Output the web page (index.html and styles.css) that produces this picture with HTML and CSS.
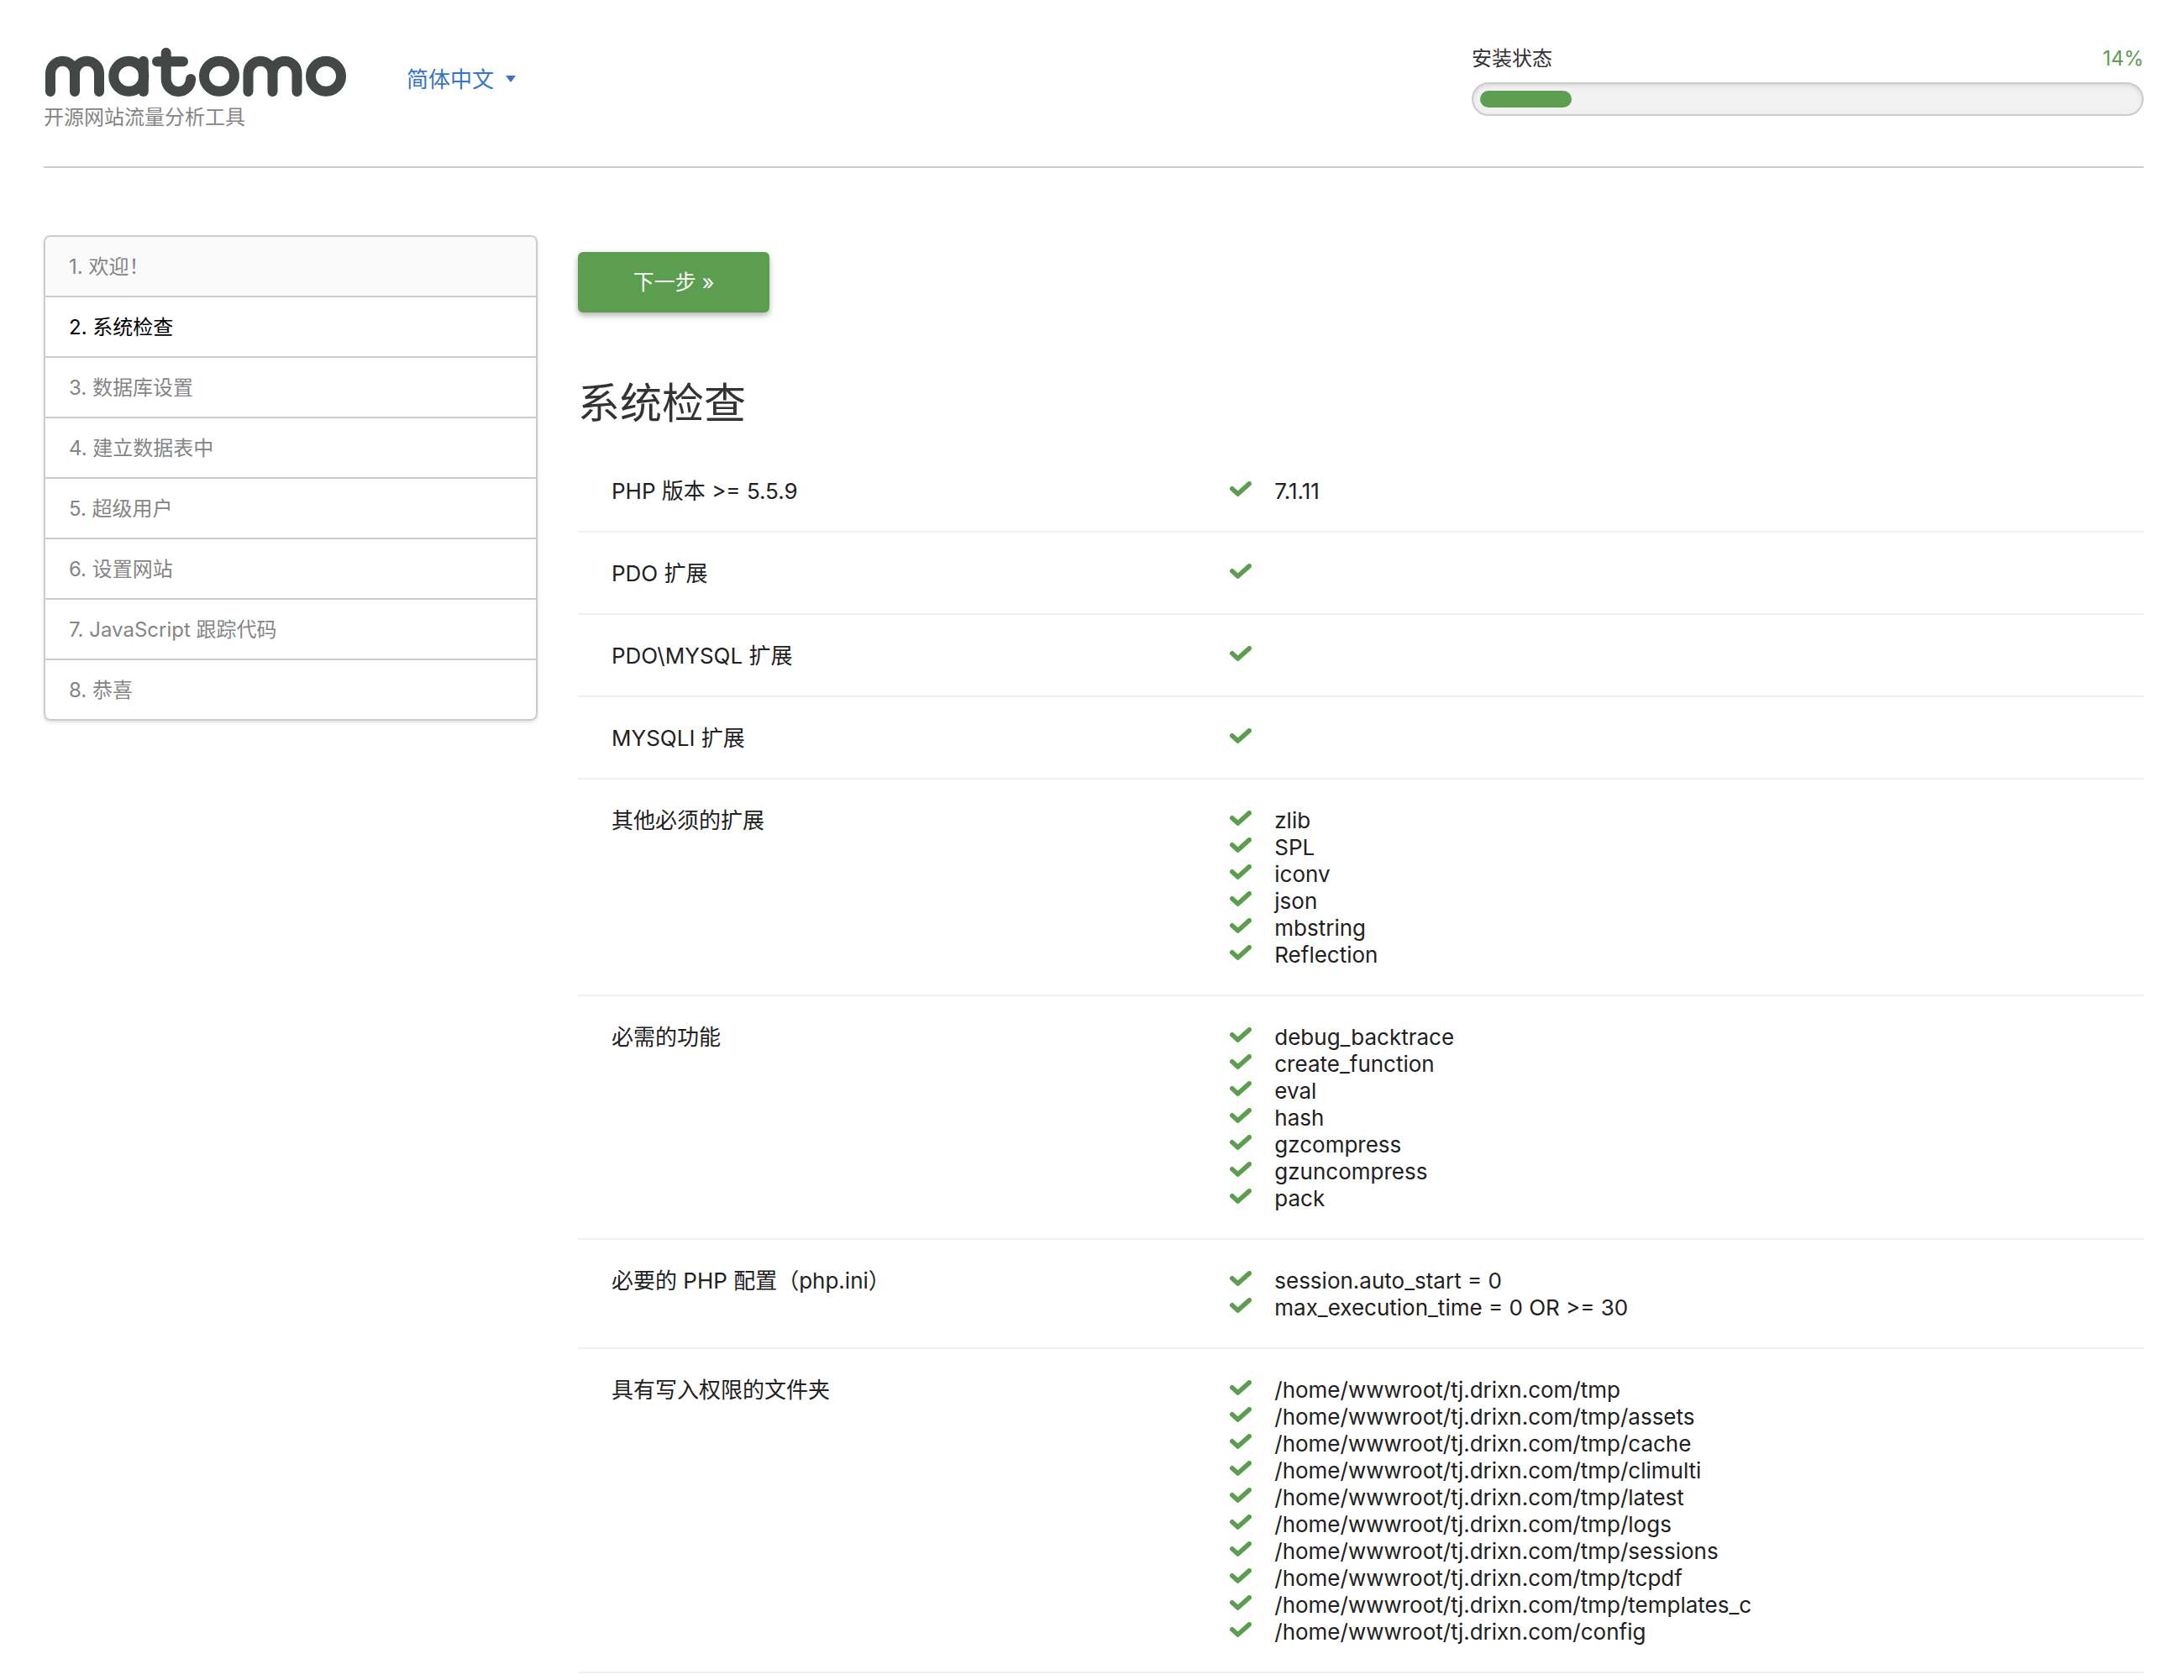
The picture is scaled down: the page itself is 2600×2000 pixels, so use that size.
FILE: index.html
```html
<!DOCTYPE html>
<html lang="zh-CN">
<head>
<meta charset="utf-8">
<meta name="viewport" content="width=device-width, initial-scale=1">
<title>Matomo › 系统检查</title>
<link rel="stylesheet" href="styles.css">
</head>
<body>
<svg class="sprite" aria-hidden="true">
  <symbol id="ok" viewBox="0 0 26 18">
    <path d="M2.8 8.8 9.6 15 23.2 2.8" fill="none" stroke="currentColor" stroke-width="5.6" stroke-linecap="round" stroke-linejoin="round"/>
  </symbol>
</svg>
<div class="page">
  <header class="header">
    <div class="brand">
      <svg class="logo" viewBox="0 0 360 60" role="img" aria-label="matomo">
        <g fill="none" stroke="currentColor" stroke-width="12" stroke-linecap="round" stroke-linejoin="round">
          <path d="M8 53V31.3a14.5 14.5 0 0 1 29 0V53M37 31.3a14.5 14.5 0 0 1 29 0V53"/>
          <circle cx="101.3" cy="34.8" r="18"/>
          <path d="M118.8 16.7V53"/>
          <path d="M145.7 6.7V38a14.7 15 0 0 0 29.4 0M135 17.2h31"/>
          <circle cx="209" cy="34.8" r="18"/>
          <path d="M243.5 53V31.3a14.5 14.5 0 0 1 29 0V53M272.5 31.3a14.5 14.5 0 0 1 29 0V53"/>
          <circle cx="336" cy="34.8" r="18"/>
        </g>
      </svg>
      <p class="tagline">开源网站流量分析工具</p>
    </div>
    <div class="language">
      <select class="language-select" aria-label="语言">
        <option>简体中文</option>
      </select>
      <svg class="language-arrow" viewBox="0 0 12 8" aria-hidden="true"><path d="M0 0h12L6 8z" fill="currentColor"/></svg>
    </div>
    <div class="status">
      <div class="status-head">
        <span id="status-label">安装状态</span>
        <span class="status-value">14%</span>
      </div>
      <div class="status-bar" role="progressbar" aria-labelledby="status-label" aria-valuemin="0" aria-valuemax="100" aria-valuenow="14">
        <div class="status-fill" style="width: 14%"></div>
      </div>
    </div>
  </header>

  <div class="content">
    <nav aria-label="安装步骤">
      <ol class="steps">
        <li class="step step-done">1. 欢迎！</li>
        <li class="step step-current" aria-current="step">2. 系统检查</li>
        <li class="step">3. 数据库设置</li>
        <li class="step">4. 建立数据表中</li>
        <li class="step">5. 超级用户</li>
        <li class="step">6. 设置网站</li>
        <li class="step">7. JavaScript 跟踪代码</li>
        <li class="step">8. 恭喜</li>
      </ol>
    </nav>

    <main class="main">
      <button class="next" type="button">下一步 »</button>
      <h1 class="title">系统检查</h1>
      <table class="checks">
        <tbody>
          <tr>
            <th scope="row">PHP 版本 &gt;= 5.5.9</th>
            <td><ul class="results"><li><svg class="ok"><use href="#ok"/></svg>7.1.11</li></ul></td>
          </tr>
          <tr>
            <th scope="row">PDO 扩展</th>
            <td><ul class="results"><li><svg class="ok"><use href="#ok"/></svg></li></ul></td>
          </tr>
          <tr>
            <th scope="row">PDO\MYSQL 扩展</th>
            <td><ul class="results"><li><svg class="ok"><use href="#ok"/></svg></li></ul></td>
          </tr>
          <tr>
            <th scope="row">MYSQLI 扩展</th>
            <td><ul class="results"><li><svg class="ok"><use href="#ok"/></svg></li></ul></td>
          </tr>
          <tr>
            <th scope="row">其他必须的扩展</th>
            <td><ul class="results">
              <li><svg class="ok"><use href="#ok"/></svg>zlib</li>
              <li><svg class="ok"><use href="#ok"/></svg>SPL</li>
              <li><svg class="ok"><use href="#ok"/></svg>iconv</li>
              <li><svg class="ok"><use href="#ok"/></svg>json</li>
              <li><svg class="ok"><use href="#ok"/></svg>mbstring</li>
              <li><svg class="ok"><use href="#ok"/></svg>Reflection</li>
            </ul></td>
          </tr>
          <tr>
            <th scope="row">必需的功能</th>
            <td><ul class="results">
              <li><svg class="ok"><use href="#ok"/></svg>debug_backtrace</li>
              <li><svg class="ok"><use href="#ok"/></svg>create_function</li>
              <li><svg class="ok"><use href="#ok"/></svg>eval</li>
              <li><svg class="ok"><use href="#ok"/></svg>hash</li>
              <li><svg class="ok"><use href="#ok"/></svg>gzcompress</li>
              <li><svg class="ok"><use href="#ok"/></svg>gzuncompress</li>
              <li><svg class="ok"><use href="#ok"/></svg>pack</li>
            </ul></td>
          </tr>
          <tr>
            <th scope="row">必要的 PHP 配置（php.ini）</th>
            <td><ul class="results">
              <li><svg class="ok"><use href="#ok"/></svg>session.auto_start = 0</li>
              <li><svg class="ok"><use href="#ok"/></svg>max_execution_time = 0 OR &gt;= 30</li>
            </ul></td>
          </tr>
          <tr>
            <th scope="row">具有写入权限的文件夹</th>
            <td><ul class="results">
              <li><svg class="ok"><use href="#ok"/></svg>/home/wwwroot/tj.drixn.com/tmp</li>
              <li><svg class="ok"><use href="#ok"/></svg>/home/wwwroot/tj.drixn.com/tmp/assets</li>
              <li><svg class="ok"><use href="#ok"/></svg>/home/wwwroot/tj.drixn.com/tmp/cache</li>
              <li><svg class="ok"><use href="#ok"/></svg>/home/wwwroot/tj.drixn.com/tmp/climulti</li>
              <li><svg class="ok"><use href="#ok"/></svg>/home/wwwroot/tj.drixn.com/tmp/latest</li>
              <li><svg class="ok"><use href="#ok"/></svg>/home/wwwroot/tj.drixn.com/tmp/logs</li>
              <li><svg class="ok"><use href="#ok"/></svg>/home/wwwroot/tj.drixn.com/tmp/sessions</li>
              <li><svg class="ok"><use href="#ok"/></svg>/home/wwwroot/tj.drixn.com/tmp/tcpdf</li>
              <li><svg class="ok"><use href="#ok"/></svg>/home/wwwroot/tj.drixn.com/tmp/templates_c</li>
              <li><svg class="ok"><use href="#ok"/></svg>/home/wwwroot/tj.drixn.com/config</li>
            </ul></td>
          </tr>
        </tbody>
      </table>
    </main>
  </div>
</div>
</body>
</html>
```

FILE: styles.css
```css
:root {
  --green: #5c9e50;
  --line: #ccc;
}

* {
  box-sizing: border-box;
}

body {
  margin: 0;
  background: #fff;
  color: #212121;
  font: 24px/32px Inter, "Noto Sans CJK SC", sans-serif;
}

.sprite {
  display: none;
}

.page {
  padding: 0 48px 0 52px;
}

/* Header */
.header {
  display: flex;
  align-items: flex-start;
  gap: 72px;
  padding: 54px 0 42px;
  border-bottom: 2px solid var(--line);
}

.brand {
  padding-top: 2px;
}

.logo {
  display: block;
  width: 360px;
  height: 60px;
  color: #434746;
}

.tagline {
  margin: 8px 0 0;
  color: #858585;
}

.language {
  position: relative;
  padding-top: 25px;
  color: #3474cb;
}

.language-select {
  display: block;
  appearance: none;
  margin: 0;
  padding: 0 25px 0 0;
  border: 0;
  background: none;
  color: inherit;
  font: inherit;
  font-size: 26px;
  cursor: pointer;
}

.language-arrow {
  position: absolute;
  right: 0;
  bottom: 13px;
  width: 12px;
  height: 8px;
  pointer-events: none;
}

.status {
  flex: none;
  width: 32%;
  margin-left: auto;
  color: #333;
}

.status-head {
  display: flex;
  justify-content: space-between;
  margin-bottom: 12px;
}

.status-value {
  color: var(--green);
}

.status-bar {
  padding: 8px;
  border: 2px solid var(--line);
  border-radius: 20px;
  background: #f1f1f1;
  box-shadow: inset 0 2px 4px rgba(0, 0, 0, 0.1);
}

.status-fill {
  height: 20px;
  border-radius: 10px;
  background: var(--green);
}

/* Steps and main column */
.content {
  display: grid;
  grid-template-columns: 588fr 1864fr;
  gap: 48px;
  align-items: start;
  padding-top: 80px;
}

.steps {
  margin: 0;
  padding: 0;
  overflow: hidden;
  list-style: none;
  border: 2px solid var(--line);
  border-radius: 8px;
  box-shadow: 0 2px 4px rgba(0, 0, 0, 0.12);
}

.step {
  padding: 20px 28px 18px;
  color: #858585;
}

.step + .step {
  border-top: 2px solid var(--line);
}

.step-done {
  background: #fafafa;
}

.step-current {
  color: #000;
}

.main {
  padding-top: 20px;
}

.next {
  display: block;
  width: 228px;
  height: 72px;
  padding: 0;
  border: 0;
  border-radius: 6px;
  background: var(--green);
  color: #fff;
  font: inherit;
  font-size: 25px;
  box-shadow: 0 4px 6px rgba(0, 0, 0, 0.2), 0 2px 10px rgba(0, 0, 0, 0.12);
  cursor: pointer;
}

.title {
  margin: 78px 0 26px;
  color: #333;
  font-size: 50px;
  font-weight: 400;
  line-height: 60px;
}

.checks {
  width: 100%;
  border-collapse: separate;
  border-spacing: 0;
  table-layout: fixed;
  font-size: 26px;
}

.checks th,
.checks td {
  padding: 33px 40px 31px;
  border-bottom: 2px solid #f0f0f0;
  text-align: left;
  font-weight: 400;
  vertical-align: top;
}

.checks th {
  width: 39.5%;
}

.results {
  margin: 0;
  padding: 0;
  list-style: none;
}

.results li {
  display: flex;
  align-items: flex-start;
  gap: 27px;
  height: 32px;
}

.ok {
  flex: none;
  width: 26px;
  height: 18px;
  margin-top: 4px;
  color: var(--green);
}
```
